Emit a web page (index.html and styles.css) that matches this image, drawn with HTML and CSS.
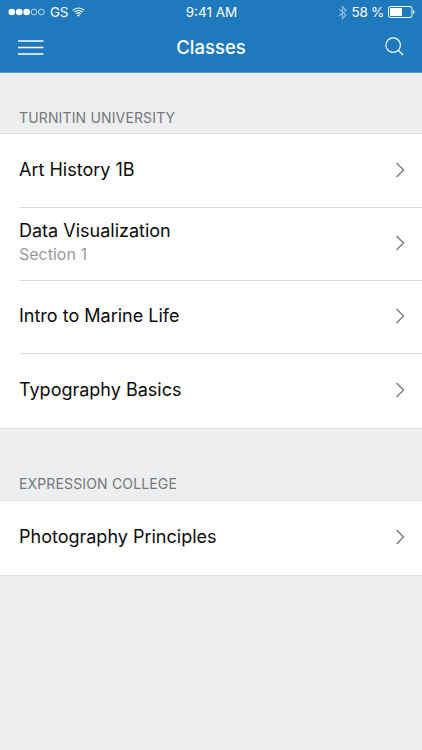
FILE: index.html
```html
<!DOCTYPE html>
<html lang="en">
<head>
<meta charset="utf-8">
<title>Classes</title>
<link rel="stylesheet" href="styles.css">
</head>
<body>
<div class="app">
  <header class="header">
    <div class="status">
      <div class="status-left">
        <svg class="signal" width="38" height="8" viewBox="0 0 38 8"><circle cx="3.8" cy="4" r="3.3" fill="#fff"/><circle cx="11.2" cy="4" r="3.3" fill="#fff"/><circle cx="18.6" cy="4" r="3.3" fill="#fff"/><circle cx="26" cy="4" r="2.9" fill="none" stroke="#fff" stroke-width=".7"/><circle cx="33.4" cy="4" r="2.9" fill="none" stroke="#fff" stroke-width=".7"/></svg>
        <span class="carrier">GS</span>
        <svg class="wifi" width="13" height="10" viewBox="0 0 15 11"><path d="M.8 3.6a9.6 9.6 0 0 1 13.4 0M2.8 5.7a6.7 6.7 0 0 1 9.4 0M4.8 7.7a3.9 3.9 0 0 1 5.4 0" fill="none" stroke="#fff" stroke-width="1.3"/><path d="M7.5 11 5.9 9.3a2.3 2.3 0 0 1 3.2 0z" fill="#fff"/></svg>
      </div>
      <div class="time">9:41 AM</div>
      <div class="status-right">
        <svg class="bt" width="9" height="15" viewBox="0 0 9 15"><path d="M1 4l7 6-3.5 3.5v-12L8 5l-7 6" fill="none" stroke="#8db9dc" stroke-width="1.2"/></svg>
        <span class="pct">58 %</span>
        <svg class="battery" width="27" height="12" viewBox="0 0 27 12"><rect x=".5" y=".5" width="23.5" height="11" rx="2" fill="none" stroke="#fff"/><rect x="2" y="2" width="12" height="8" fill="#fff"/><path d="M25 4.2c1 .2 1.5.8 1.5 1.8s-.5 1.6-1.5 1.8z" fill="#fff"/></svg>
      </div>
    </div>
    <div class="nav">
      <svg class="menu" width="26" height="15" viewBox="0 0 26 15"><path d="M0 1h25.5M0 7.500h25.500M0 14h25.500" stroke="#fff" stroke-width="1.400"/></svg>
      <h1 class="title">Classes</h1>
      <svg class="search" width="19" height="19" viewBox="0 0 21 21"><circle cx="9" cy="9" r="8" fill="none" stroke="#fff" stroke-width="1.300"/><path d="M14.700 14.700 20 20" stroke="#fff" stroke-width="1.500"/></svg>
    </div>
  </header>

  <main>
    <section class="group group-first">
      <h2 class="group-name">TURNITIN UNIVERSITY</h2>
      <ul class="list">
        <li class="row"><div class="row-text"><span class="row-title">Art History 1B</span></div><svg class="chev" width="10" height="16" viewBox="0 0 10 16"><path d="M1.500 1 8.500 8 1.500 15" fill="none" stroke="#808285" stroke-width="1.500"/></svg></li>
        <li class="row"><div class="row-text"><span class="row-title">Data Visualization</span><span class="row-sub">Section 1</span></div><svg class="chev" width="10" height="16" viewBox="0 0 10 16"><path d="M1.500 1 8.500 8 1.500 15" fill="none" stroke="#808285" stroke-width="1.500"/></svg></li>
        <li class="row"><div class="row-text"><span class="row-title">Intro to Marine Life</span></div><svg class="chev" width="10" height="16" viewBox="0 0 10 16"><path d="M1.500 1 8.500 8 1.500 15" fill="none" stroke="#808285" stroke-width="1.500"/></svg></li>
        <li class="row"><div class="row-text"><span class="row-title">Typography Basics</span></div><svg class="chev" width="10" height="16" viewBox="0 0 10 16"><path d="M1.500 1 8.500 8 1.500 15" fill="none" stroke="#808285" stroke-width="1.500"/></svg></li>
      </ul>
    </section>
    <section class="group group-second">
      <h2 class="group-name">EXPRESSION COLLEGE</h2>
      <ul class="list">
        <li class="row"><div class="row-text"><span class="row-title">Photography Principles</span></div><svg class="chev" width="10" height="16" viewBox="0 0 10 16"><path d="M1.500 1 8.500 8 1.500 15" fill="none" stroke="#808285" stroke-width="1.500"/></svg></li>
      </ul>
    </section>
  </main>
</div>
</body>
</html>
```
FILE: styles.css
```css
* { box-sizing: border-box; }
html, body { margin: 0; padding: 0; }
body {
  width: 422px;
  height: 750px;
  overflow: hidden;
  background: #edeef0;
  font-family: Inter, "Liberation Sans", sans-serif;
  color: #0b0b0c;
}
.app { height: 750px; }
.header {
  height: 73px;
  background: #1f79bd;
  border-bottom: 1px solid #5b9bcd;
  color: #fff;
}
.status {
  display: grid;
  grid-template-columns: 1fr auto 1fr;
  align-items: center;
  height: 23px;
  padding: 1px 7px 0 8px;
  font-size: 13.5px;
}
.status-left { display: flex; align-items: center; gap: 4px; }
.status-right { display: flex; align-items: center; justify-content: flex-end; gap: 5px; }
.carrier { letter-spacing: -.3px; }
.pct { letter-spacing: -.3px; margin-right: -1px; }
.nav {
  display: grid;
  grid-template-columns: 1fr auto 1fr;
  align-items: center;
  height: 49px;
  padding: 0 18px;
}
.title {
  margin: 0 0 2px;
  font-size: 18.5px;
  font-weight: 500;
}
.search {
  justify-self: end;
  margin: 0 0 3px;
}
.group-first { padding-top: 35px; }
.group-second { padding-top: 45px; }
.group-second .list { margin-top: 1px; }
.group-name {
  margin: 0;
  padding: 0 19px;
  height: 25px;
  line-height: 19px;
  font-size: 14px;
  font-weight: 400;
  letter-spacing: .15px;
  color: #76787b;
}
.list {
  margin: 0;
  padding: 0;
  list-style: none;
  background: #fff;
  border-top: 1px solid #dfe0e2;
  border-bottom: 1px solid #dfe0e2;
}
.row {
  position: relative;
  display: flex;
  align-items: center;
  justify-content: space-between;
  height: 73px;
  padding: 0 17px 2px 19px;
}
.row:last-child { height: 75px; }
.group-second .row { height: 73.5px; }
.row + .row::before {
  content: "";
  position: absolute;
  left: 19px;
  right: 0;
  top: 0;
  border-top: 1px solid #d9dadc;
}
.row-text { display: flex; flex-direction: column; }
.row-title { font-size: 18px; line-height: 24px; }
.row-sub { font-size: 16px; line-height: 23px; color: #98999c; }
```
